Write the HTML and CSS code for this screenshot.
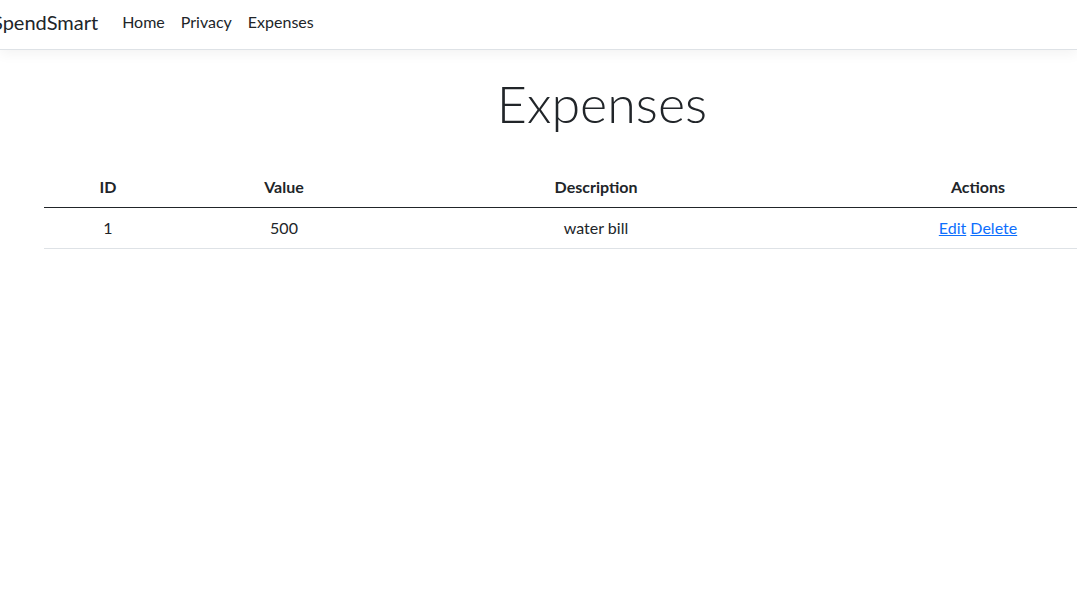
FILE: index.html
```html
<!DOCTYPE html>
<html lang="en">

<head>
  <meta charset="UTF-8">
  <meta name="viewport" content="width=device-width, initial-scale=1.0">
  <title>Expenses - SpendSmart</title>
  <link rel="stylesheet" href="styles.css">
</head>

<body>

  <header>
    <nav class="navbar">
      <a class="navbar-brand" href="#">SpendSmart</a>
      <ul class="nav-links">
        <li><a class="nav-link" href="#">Home</a></li>
        <li><a class="nav-link" href="#">Privacy</a></li>
        <li><a class="nav-link" href="#">Expenses</a></li>
      </ul>
    </nav>
  </header>

  <div class="container">
    <main>
      <h1 class="display-4">Expenses</h1>

      <table class="table">
        <thead>
          <tr>
            <th class="col-id">ID</th>
            <th class="col-value">Value</th>
            <th class="col-desc">Description</th>
            <th class="col-actions">Actions</th>
          </tr>
        </thead>
        <tbody>
          <tr>
            <td>1</td>
            <td>500</td>
            <td>water bill</td>
            <td>
              <a href="#">Edit</a>
              <a href="#">Delete</a>
            </td>
          </tr>
        </tbody>
      </table>
    </main>
  </div>

</body>

</html>
```

FILE: styles.css
```css
body {
  font-family: 'Lato', 'Noto Sans', sans-serif;
  font-size: 16px;
  line-height: 1.5;
  color: #212529;
  margin: 0;
  padding: 0;
  background-color: #fff;
  overflow: hidden;
}

.navbar {
  display: flex;
  align-items: center;
  height: 50px;
  padding: 0 12px 5px 0;
  box-sizing: border-box;
  border-bottom: 1px solid #dee2e6;
  box-shadow: 0 4px 12px rgba(0, 0, 0, 0.05);
  background-color: #fff;
}

.navbar-brand {
  margin-left: -8px;
  margin-right: 16px;
  font-size: 20px;
  color: #212529;
  text-decoration: none;
  white-space: nowrap;
}

.nav-links {
  display: flex;
  list-style: none;
  margin: 0;
  padding: 0;
}

.nav-link {
  display: block;
  padding: 8px;
  color: #212529;
  text-decoration: none;
}

.container {
  width: 1116px;
  margin-left: 44px;
}

.display-4 {
  font-size: 52px;
  font-weight: 300;
  line-height: 1.2;
  text-align: center;
  margin: 22px 0 33px;
}

.table {
  width: 100%;
  border-collapse: collapse;
  text-align: center;
}

.table th,
.table td {
  padding: 8px;
  border-bottom: 1px solid #dee2e6;
}

.table thead th {
  font-weight: bold;
  border-bottom: 1px solid #212529;
}

.col-id {
  width: 112px;
}

.col-value {
  width: 208px;
}

.col-desc {
  width: 384px;
}

.table a {
  color: #0d6efd;
}
```
